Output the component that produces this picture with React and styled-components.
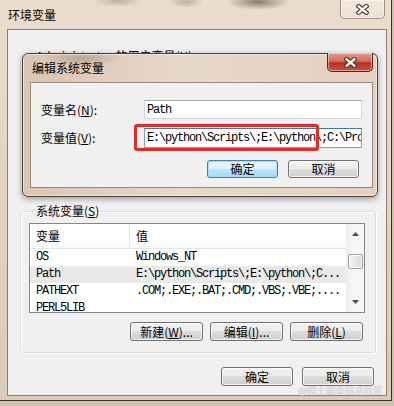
import React from 'react';
import styled, { createGlobalStyle } from 'styled-components';

const CJK = `"Noto Sans CJK SC", "Noto Sans", sans-serif`;
const MONO = `"Liberation Mono", "DejaVu Sans Mono", monospace`;

const GlobalStyle = createGlobalStyle`
  html, body {
    margin: 0;
    padding: 0;
  }
  body {
    width: 394px;
    height: 406px;
    overflow: hidden;
    background: #cfc0b1;
    font-family: ${CJK};
  }
`;

const Window = styled.div`
  position: relative;
  box-sizing: border-box;
  width: 392px;
  height: 401px;
  padding: 0 4px 4px 7px;
  border-right: 1px solid #3b2f26;
  border-bottom: 1px solid #3b2f26;
  display: flex;
  flex-direction: column;
  overflow: hidden;
  background:
    radial-gradient(ellipse 32px 8px at 258px 2px, rgba(60, 45, 35, 0.55), transparent),
    radial-gradient(ellipse 26px 6px at 118px 1px, rgba(90, 70, 55, 0.3), transparent),
    radial-gradient(ellipse 18px 6px at 186px 2px, rgba(90, 70, 55, 0.3), transparent),
    linear-gradient(180deg, #ebddce 0%, #e4d4c3 40%, #dccab8 100%);
`;

const TitleBar = styled.div`
  height: 29px;
  display: flex;
  justify-content: space-between;
  align-items: flex-start;
`;

const Title = styled.div`
  padding: ${(p) => p.$top}px 0 0 ${(p) => p.$left}px;
  font: 12px/14px ${CJK};
  color: #000;
`;

const CloseBox = styled.div`
  box-sizing: border-box;
  width: ${(p) => p.$w}px;
  height: 19px;
  margin: ${(p) => p.$mt}px ${(p) => p.$mr}px 0 0;
  display: flex;
  align-items: center;
  justify-content: center;
  border: 1px solid ${(p) => (p.$active ? '#5e2119' : 'rgba(90, 70, 55, 0.55)')};
  border-top: none;
  border-radius: 0 0 5px 5px;
  background: ${(p) =>
    p.$active
      ? 'linear-gradient(180deg, #e49a8a 0%, #d36c5c 45%, #b7301f 55%, #c9543f 100%)'
      : 'linear-gradient(180deg, rgba(255,255,255,0.35), rgba(255,255,255,0.15))'};
  box-shadow: inset 0 0 0 1px rgba(255, 255, 255, 0.45);
`;

const Client = styled.div`
  flex: 1;
  display: flex;
  flex-direction: column;
  padding: 0 10px 0 12px;
  border: 1px solid #8e7d6d;
  background: #f0f0f0;
`;

const Group = styled.fieldset`
  box-sizing: border-box;
  height: ${(p) => p.$h}px;
  min-inline-size: 0;
  margin: ${(p) => p.$mt}px 0 0 0;
  padding: 5px 10px 11px 8px;
  border: 1px solid #d5dfe5;
  border-radius: 3px;
  box-shadow: inset 1px 1px 0 #fff, 1px 1px 0 #fff;
  display: flex;
  flex-direction: column;
`;

const Legend = styled.legend`
  margin-left: 5px;
  padding: 0 2px;
  font: 12px/14px ${CJK};
  color: #000;
`;

const List = styled.div`
  height: 90px;
  box-sizing: border-box;
  border: 1px solid #828790;
  background: #fff;
  display: flex;
  overflow: hidden;
`;

const Table = styled.div`
  flex: 1;
  min-width: 0;
  display: flex;
  flex-direction: column;
  overflow: hidden;
`;

const HeaderRow = styled.div`
  display: flex;
  height: 24px;
  flex-shrink: 0;
  border-bottom: 1px solid #e5e5e5;
  background: linear-gradient(180deg, #ffffff 0%, #ffffff 60%, #f7f8f9 100%);
`;

const HeaderCell = styled.div`
  box-sizing: border-box;
  width: ${(p) => (p.$w ? `${p.$w}px` : 'auto')};
  flex: ${(p) => (p.$w ? 'none' : 1)};
  padding-left: 6px;
  border-right: ${(p) => (p.$w ? '1px solid #e5e5e5' : 'none')};
  display: flex;
  align-items: center;
  font: 12px/14px ${CJK};
  color: #000;
`;

const Row = styled.div`
  display: flex;
  height: 17px;
  flex-shrink: 0;
  align-items: center;
  background: ${(p) => (p.$selected ? '#e9e9e9' : 'transparent')};
`;

const Cell = styled.div`
  box-sizing: border-box;
  width: ${(p) => (p.$w ? `${p.$w}px` : 'auto')};
  flex: ${(p) => (p.$w ? 'none' : 1)};
  min-width: 0;
  padding-left: 6px;
  white-space: nowrap;
  overflow: hidden;
  font: 12px/17px ${MONO};
  letter-spacing: -1.2px;
  color: #000;
`;

const ScrollBar = styled.div`
  width: 17px;
  flex-shrink: 0;
  display: flex;
  flex-direction: column;
  background: linear-gradient(90deg, #eeeeee, #f8f8f8 40%, #f4f4f4);
  border-left: 1px solid #f0f0f0;
`;

const ScrollArrow = styled.div`
  height: 17px;
  display: flex;
  align-items: ${(p) => (p.$down ? 'flex-start' : 'flex-end')};
  justify-content: center;
  padding: ${(p) => (p.$down ? '5px 0 0' : '0 0 5px')};
  box-sizing: border-box;
`;

const Track = styled.div`
  flex: 1;
  padding: 13px 1px 0 1px;
`;

const Thumb = styled.div`
  box-sizing: border-box;
  height: 15px;
  border: 1px solid #a0a0a0;
  border-radius: 2px;
  background: linear-gradient(90deg, #f4f4f4, #e6e6e6 50%, #d8d8d8);
  box-shadow: inset 0 0 0 1px #fbfbfb;
`;

const ButtonRow = styled.div`
  display: flex;
  justify-content: flex-end;
  gap: ${(p) => p.$gap}px;
  margin-top: ${(p) => p.$mt}px;
  padding-right: ${(p) => p.$pr}px;
`;

const Button = styled.div`
  box-sizing: border-box;
  width: ${(p) => p.$w}px;
  height: ${(p) => p.$h}px;
  display: flex;
  align-items: center;
  justify-content: center;
  border: 1px solid ${(p) => (p.$default ? '#3c7fb1' : '#707070')};
  border-radius: 3px;
  background: ${(p) =>
    p.$default
      ? 'linear-gradient(180deg, #eaf6fd 0%, #d9f0fc 50%, #bee6fd 50%, #a7d9f5 100%)'
      : 'linear-gradient(180deg, #f2f2f2 0%, #ebebeb 50%, #dddddd 50%, #cfcfcf 100%)'};
  box-shadow: inset 0 0 0 1px ${(p) => (p.$default ? '#9fe0ff' : 'rgba(255,255,255,0.75)')};
  font: 12px/14px ${CJK};
  color: #000;
`;

const Dialog = styled.div`
  position: absolute;
  left: 22px;
  top: 53px;
  box-sizing: border-box;
  width: 356px;
  height: 144px;
  padding: 0 4px 8px 7px;
  display: flex;
  flex-direction: column;
  border: 1px solid #4b3d31;
  border-radius: 6px;
  background:
    radial-gradient(ellipse 40px 10px at 60px 4px, rgba(120, 95, 75, 0.35), transparent),
    linear-gradient(90deg, #d9c5b2 0%, #e8d8c8 45%, #e3d0c0 100%);
  box-shadow: inset 0 0 0 1px rgba(255, 255, 255, 0.5), 0 2px 6px rgba(0, 0, 0, 0.35);
`;

const DialogTitleBar = styled.div`
  height: 28px;
  display: flex;
  justify-content: space-between;
  align-items: flex-start;
`;

const DialogClient = styled.div`
  flex: 1;
  min-width: 0;
  padding: 17px 10px 0 10px;
  border: 1px solid #9b8a79;
  background: #f0f0f0;
  display: flex;
  flex-direction: column;
`;

const FieldRow = styled.div`
  display: flex;
  align-items: center;
  margin-top: ${(p) => p.$mt}px;
`;

const Label = styled.div`
  width: 103px;
  flex-shrink: 0;
  font: 12px/14px ${CJK};
  color: #000;
`;

const FieldWrap = styled.div`
  position: relative;
  flex: 1;
  min-width: 0;
`;

const Field = styled.div`
  box-sizing: border-box;
  height: ${(p) => p.$h}px;
  padding-left: 2px;
  display: flex;
  align-items: center;
  white-space: nowrap;
  overflow: hidden;
  border: 1px solid ${(p) => (p.$focused ? '#7da2ce' : '#d3d5da')};
  border-top-color: ${(p) => (p.$focused ? '#3d7bad' : '#abadb3')};
  background: #fff;
  font: 12px/14px ${MONO};
  letter-spacing: -1.2px;
  color: #000;
`;

const Highlight = styled.div`
  position: absolute;
  left: -10px;
  top: -4px;
  width: 185px;
  height: 27px;
  box-sizing: border-box;
  border: 3px solid #e62a22;
  border-radius: 3px;
  pointer-events: none;
`;

const Watermark = styled.div`
  position: absolute;
  right: 8px;
  bottom: 4px;
  font: 9.5px/12px ${CJK};
  color: rgba(255, 255, 255, 0.85);
  text-shadow: 0 0 1px rgba(0, 0, 0, 0.45);
`;

function CloseGlyph() {
  return (
    <svg width="13" height="11" viewBox="-6.5 -5.5 13 11">
      <path d="M-3.8 -3.2 L3.8 3.2 M3.8 -3.2 L-3.8 3.2" stroke="#3a2e28" strokeWidth="4.4" strokeLinecap="square" />
      <path d="M-3.8 -3.2 L3.8 3.2 M3.8 -3.2 L-3.8 3.2" stroke="#fff" strokeWidth="2.4" strokeLinecap="square" />
    </svg>
  );
}

function Arrow({ down }) {
  return (
    <svg width="7" height="4" viewBox="0 0 7 4">
      <path d={down ? 'M0 0 L7 0 L3.5 4 Z' : 'M0 4 L7 4 L3.5 0 Z'} fill="#4d4d4d" />
    </svg>
  );
}

const rows = [
  { name: 'OS', value: 'Windows_NT' },
  { name: 'Path', value: 'E:\\python\\Scripts\\;E:\\python\\;C...', selected: true },
  { name: 'PATHEXT', value: '.COM;.EXE;.BAT;.CMD;.VBS;.VBE;....' },
  { name: 'PERL5LIB', value: '' },
];

export default function App() {
  return (
    <>
      <GlobalStyle />
      <Window>
        <TitleBar>
          <Title $top={8} $left={1}>环境变量</Title>
          <CloseBox $w={45} $mt={0} $mr={2}>
            <CloseGlyph />
          </CloseBox>
        </TitleBar>

        <Client>
          <Group $h={147} $mt={19}>
            <Legend>Administrator 的用户变量(<u>U</u>)</Legend>
          </Group>

          <Group $h={149} $mt={8}>
            <Legend>系统变量(<u>S</u>)</Legend>
            <List>
              <Table>
                <HeaderRow>
                  <HeaderCell $w={100}>变量</HeaderCell>
                  <HeaderCell>值</HeaderCell>
                </HeaderRow>
                {rows.map((r) => (
                  <Row key={r.name} $selected={r.selected}>
                    <Cell $w={100}>{r.name}</Cell>
                    <Cell>{r.value}</Cell>
                  </Row>
                ))}
              </Table>
              <ScrollBar>
                <ScrollArrow>
                  <Arrow />
                </ScrollArrow>
                <Track>
                  <Thumb />
                </Track>
                <ScrollArrow $down>
                  <Arrow down />
                </ScrollArrow>
              </ScrollBar>
            </List>
            <ButtonRow $gap={7} $mt={9} $pr={2}>
              <Button $w={73} $h={19}>新建(<u>W</u>)...</Button>
              <Button $w={73} $h={19}>编辑(<u>I</u>)...</Button>
              <Button $w={73} $h={19}>删除(<u>L</u>)</Button>
            </ButtonRow>
          </Group>

          <ButtonRow $gap={9} $mt={14} $pr={2}>
            <Button $w={72} $h={19}>确定</Button>
            <Button $w={72} $h={19}>取消</Button>
          </ButtonRow>
        </Client>

        <Dialog>
          <DialogTitleBar>
            <Title $top={7} $left={2}>编辑系统变量</Title>
            <CloseBox $w={46} $mt={-1} $mr={0} $active>
              <CloseGlyph />
            </CloseBox>
          </DialogTitleBar>
          <DialogClient>
            <FieldRow $mt={0}>
              <Label>变量名(<u>N</u>):</Label>
              <FieldWrap>
                <Field $h={19}>Path</Field>
              </FieldWrap>
            </FieldRow>
            <FieldRow $mt={9}>
              <Label>变量值(<u>V</u>):</Label>
              <FieldWrap>
                <Field $h={20} $focused>E:\python\Scripts\;E:\python\;C:\Program Files\</Field>
                <Highlight />
              </FieldWrap>
            </FieldRow>
            <ButtonRow $gap={10} $mt={12} $pr={3}>
              <Button $w={71} $h={18} $default>确定</Button>
              <Button $w={71} $h={18}>取消</Button>
            </ButtonRow>
          </DialogClient>
        </Dialog>

        <Watermark>@稀土掘金技术社区</Watermark>
      </Window>
    </>
  );
}
